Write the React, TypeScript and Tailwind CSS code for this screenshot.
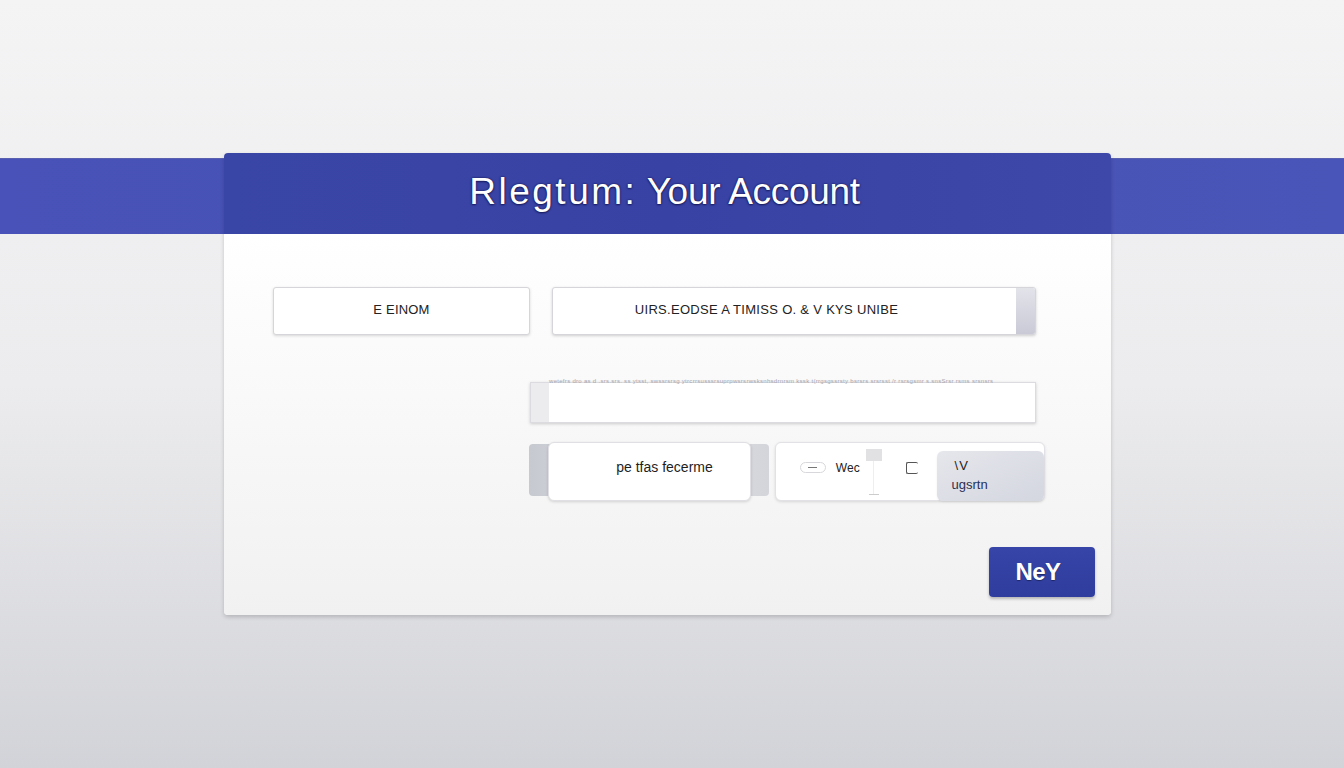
import React from "react";

export default function App() {
  return (
    <div
      className="relative w-full h-[768px] overflow-hidden bg-gradient-to-b from-[#f4f4f5] via-[#ececee] to-[#d2d3d8]"
      style={{ fontFamily: '"Liberation Sans", Arial, sans-serif' }}
    >
      {/* full-width band behind the card */}
      <div className="absolute left-0 right-0 top-[158px] h-[76px] bg-gradient-to-r from-[#4852b8] via-[#4753b3] to-[#4a55b9] border-t border-[#5a60b0]" />

      <div className="relative pt-[153px] pl-[224px]">
        <div className="w-[887px] h-[462px] rounded-[4px] bg-[#f7f7f8] shadow-[0_2px_4px_rgba(0,0,0,0.18)] overflow-hidden flex flex-col">
          {/* header */}
          <div className="h-[81px] bg-gradient-to-r from-[#3a46a6] via-[#3842a4] to-[#3d48a8] flex items-center justify-center">
            <h1 className="text-[37px] font-medium text-white tracking-[-0.3px] [text-shadow:0_0_2px_rgba(10,10,60,0.9),0_1px_2px_rgba(10,10,60,0.6)] mt-[-4px] ml-[-6px] whitespace-nowrap">
              <span className="tracking-[2.5px]">Rlegtum:</span> Your Account
            </h1>
          </div>

          {/* body */}
          <div className="flex-1 flex flex-col bg-gradient-to-b from-[#ffffff] to-[#f1f1f2]">
            {/* row 1 */}
            <div className="flex mt-[53px] ml-[49px] gap-[22px]">
              <div className="w-[257px] h-[48px] bg-white border border-[#d6d6da] rounded-[3px] shadow-[0_1px_3px_rgba(0,0,0,0.15)] flex items-center justify-center">
                <span className="text-[13px] text-[#222] tracking-[0.2px] mt-[-3px]">E EINOM</span>
              </div>
              <div className="w-[484px] h-[48px] bg-white border border-[#d6d6da] rounded-[3px] shadow-[0_1px_3px_rgba(0,0,0,0.18)] flex overflow-hidden">
                <div className="flex-1 flex items-center justify-center">
                  <span className="text-[13px] text-[#222] tracking-[0.3px] mr-[36px] mt-[-3px]">
                    UIRS.EODSE A TIMISS O. &amp; V KYS UNIBE
                  </span>
                </div>
                <div className="w-[19px] bg-gradient-to-b from-[#e3e3ea] to-[#c9cad6]" />
              </div>
            </div>

            {/* row 2 */}
            <div className="ml-[306px] mt-[47px] w-[506px] flex flex-col">
              <div className="h-[41px] bg-white border border-[#dcdce0] shadow-[0_1px_3px_rgba(0,0,0,0.18)] flex relative">
                <span className="absolute left-[18px] top-[-5px] text-[6px] leading-[6px] text-[#a6a6ae] whitespace-nowrap tracking-[0.3px]">
                  wetefrs dro as d .srs.srs. ss ytsst, swssrsrsg ytrcrrsusssrsuprpwsrsrwsksnhsdrnrsm kssk t(rrgsgssrsty bsrsrs srsrsst /r rsrsgsmr s.snsSrsr rsms srsnsrs
                </span>
                <div className="w-[18px] bg-[#ececef]" />
                <div className="flex-1" />
              </div>
            </div>

            {/* row 3 */}
            <div className="flex ml-[305px] mt-[19px]">
              <div className="relative w-[240px] h-[59px]">
                <div className="absolute left-0 top-[2px] w-[240px] h-[52px] rounded-[4px] bg-gradient-to-r from-[#c7c9d1] via-[#e2e2e6] to-[#d4d5da]" />
                <div className="absolute left-[19px] top-0 w-[203px] h-[59px] rounded-[6px] bg-white border border-[#e0e0e4] shadow-[0_1px_3px_rgba(0,0,0,0.15)] flex items-center justify-center">
                  <span className="text-[14px] text-[#1e1e1e] ml-[30px] mt-[-8px]">pe tfas fecerme</span>
                </div>
              </div>
              <div className="ml-[6px] w-[270px] h-[59px] rounded-[6px] bg-white border border-[#e2e2e6] shadow-[0_1px_3px_rgba(0,0,0,0.12)] flex items-center relative">
                <div className="ml-[24px] w-[26px] h-[11px] rounded-full border border-[#d8d8dc] flex items-center justify-center mt-[-8px]">
                  <div className="w-[9px] h-[1px] bg-[#777]" />
                </div>
                <span className="ml-[10px] text-[12px] text-[#222] font-medium mt-[-8px]">Wec</span>
                <div className="ml-[6px] w-[16px] h-[46px] flex flex-col items-center">
                  <div className="w-[16px] h-[12px] bg-[#e1e1e4]" />
                  <div className="w-[1px] flex-1 bg-[#eeeeef]" />
                  <div className="w-[10px] h-[1px] bg-[#ccc]" />
                </div>
                <div className="ml-[24px] w-[12px] h-[12px] border-l border-t border-b border-[#555] rounded-[2px] mt-[-8px]" />
                <div className="ml-[19px] w-[108px] h-[50px] mt-[8px] rounded-[6px] bg-gradient-to-br from-[#e6e7ec] to-[#d4d6e0] flex flex-col justify-center pl-[18px] shadow-[0_1px_2px_rgba(0,0,0,0.08)]">
                  <span className="text-[13px] leading-[14px] text-[#222] tracking-[1px]">\V</span>
                  <span className="text-[13px] leading-[16px] text-[#2a2f55] mt-[4px] ml-[-3px]">ugsrtn</span>
                </div>
              </div>
            </div>

            {/* next button */}
            <div className="flex justify-end mt-[46px] mr-[16px]">
              <button className="w-[106px] h-[50px] rounded-[4px] bg-gradient-to-b from-[#3744a8] to-[#2f3d9e] shadow-[0_2px_3px_rgba(0,0,0,0.25)] flex items-center justify-center">
                <span className="text-[24px] font-bold text-white tracking-[-0.5px] [text-shadow:0_1px_1px_rgba(0,0,0,0.4)] mr-[8px]">NeY</span>
              </button>
            </div>
          </div>
        </div>
      </div>
    </div>
  );
}
